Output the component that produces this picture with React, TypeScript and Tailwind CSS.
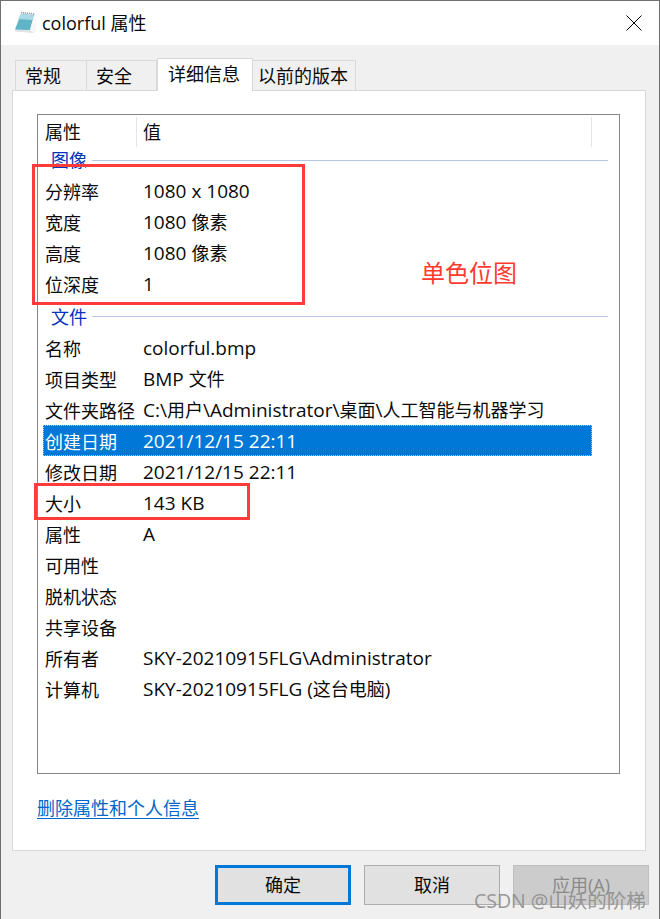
import React from 'react';

const font = "font-['Open_Sans','Noto_Sans_CJK_SC',sans-serif]";

// Latin glyphs in the reference run wider than the CJK ones, so CJK runs get their own size
const Value = ({ text }: { text?: string }) => (
  <span className="text-[19px] whitespace-nowrap">
    {(text || '').split(/([\u4e00-\u9fff]+)/).map((part, i) =>
      i % 2 ? (
        <span key={i} className="text-[18px]">
          {part}
        </span>
      ) : (
        part
      ),
    )}
  </span>
);

const Row = ({ name, value, selected }: { name: string; value?: string; selected?: boolean }) => (
  <div
    className={`flex h-[31px] w-[549px] items-center pt-[2px] ${
      selected ? 'bg-[#0078d7] text-white outline-1 -outline-offset-1 outline-dotted outline-[#9ec8ee]' : 'text-[#0a0a0a]'
    }`}
  >
    <span className="w-[100px] pl-[2px] whitespace-nowrap">{name}</span>
    <Value text={value} />
  </div>
);

const Group = ({ label, className }: { label: string; className: string }) => (
  <div className={`flex items-center ${className}`}>
    <span className="ml-[8px] mr-[5px] text-[#0033bc] leading-none whitespace-nowrap">{label}</span>
    <div className="h-px flex-1 bg-[#b4c5e6]" />
  </div>
);

const Tab = ({ label, className }: { label: string; className: string }) => (
  <div className={`flex h-[30px] items-center border border-b-0 border-[#d9d9d9] text-[#0a0a0a] whitespace-nowrap ${className}`}>
    {label}
  </div>
);

const Button = ({ label, className }: { label: string; className: string }) => (
  <div className={`flex h-[40px] w-[136px] items-center justify-center ${className}`}>{label}</div>
);

export default function App() {
  return (
    <div className={`relative h-[919px] w-[660px] overflow-hidden border-x border-t border-[#6f6f6f] bg-[#f0f0f0] text-[18px] leading-none ${font}`}>
      {/* Title bar */}
      <div className="flex h-[44px] items-center bg-white pl-[12px] pr-[17px]">
        <svg width="24" height="24" viewBox="0 0 24 24" className="mr-[5px]">
          <path d="M8 1.5 L22 3 L22.5 20 L20 22 L2 20.5 Z" fill="#dfe3e6" />
          <path d="M8 3 L21 4.5 L17 19 L2 18.5 Z" fill="#5fb4c8" />
          <path d="M8 3 L21 4.5 L19.5 9 L5 8 Z" fill="#a9dbe6" />
          <path d="M17 19 L21 4.5 L22 4.5 L22.5 19.5 L20 21.5 Z" fill="#f6f7f8" />
          <path d="M8 1.5 L22 3" stroke="#8f979c" strokeWidth="1.5" strokeDasharray="1 1" fill="none" />
        </svg>
        <span className="text-[#0a0a0a]">colorful 属性</span>
        <svg width="16" height="16" viewBox="0 0 16 16" className="ml-auto">
          <path d="M0.5 0.5 L15.5 15.5 M15.5 0.5 L0.5 15.5" stroke="#000" strokeWidth="1" fill="none" />
        </svg>
      </div>

      {/* Tabs */}
      <div className="flex h-[45px] items-end pl-[14px]">
        <Tab label="常规" className="w-[72px] -mr-px pl-[9px]" />
        <Tab label="安全" className="w-[71px] pl-[9px]" />
        <div className="relative z-10 -mb-px flex h-[33px] w-[96px] items-center justify-center border border-b-0 border-[#d9d9d9] bg-white pb-[3px] pr-[2px] text-[#0a0a0a] whitespace-nowrap">
          详细信息
        </div>
        <Tab label="以前的版本" className="w-[104px] -ml-px pl-[5px]" />
      </div>

      {/* Page */}
      <div className="ml-[11px] h-[761px] w-[634px] border border-[#d9d9d9] bg-white pl-[24px] pt-[23px]">
        <div className="h-[660px] w-[583px] border border-[#82878c] pl-[5px]">
          <div className="flex h-[30px] items-center pt-[3px] text-[#0a0a0a]">
            <span className="w-[94px] border-r border-[#e5e5e5] pl-[2px] leading-[30px]">属性</span>
            <span className="w-[455px] border-r border-[#e5e5e5] pl-[6px] leading-[30px]">值</span>
          </div>
          <Group label="图像" className="h-[30px] w-[565px]" />
          <Row name="分辨率" value="1080 x 1080" />
          <Row name="宽度" value="1080 像素" />
          <Row name="高度" value="1080 像素" />
          <Row name="位深度" value="1" />
          <Group label="文件" className="h-[33px] w-[565px] pt-[2px]" />
          <Row name="名称" value="colorful.bmp" />
          <Row name="项目类型" value="BMP 文件" />
          <Row name="文件夹路径" value="C:\用户\Administrator\桌面\人工智能与机器学习" />
          <Row name="创建日期" value="2021/12/15 22:11" selected />
          <Row name="修改日期" value="2021/12/15 22:11" />
          <Row name="大小" value="143 KB" />
          <Row name="属性" value="A" />
          <Row name="可用性" />
          <Row name="脱机状态" />
          <Row name="共享设备" />
          <Row name="所有者" value="SKY-20210915FLG\Administrator" />
          <Row name="计算机" value="SKY-20210915FLG (这台电脑)" />
        </div>
        <div className="mt-[24px] w-fit border-b border-[#0066cc] text-[#0066cc] leading-[20px]">删除属性和个人信息</div>
      </div>

      {/* Footer buttons */}
      <div className="flex gap-[13px] pl-[214px] pt-[14px] text-[#0a0a0a]">
        <Button label="确定" className="border-[3px] border-[#0078d7] bg-[#e1e1e1]" />
        <Button label="取消" className="border border-[#adadad] bg-[#e1e1e1]" />
        <Button label="应用(A)" className="border border-[#bfbfbf] bg-[#cccccc] text-[#8a8a8a]" />
      </div>

      {/* Red annotations over the screenshot */}
      <div className="absolute left-[31px] top-[163px] h-[141px] w-[273px] border-[3px] border-[#ff3b3b]" />
      <div className="absolute left-[33px] top-[482px] h-[37px] w-[216px] border-[3px] border-[#ff3b3b]" />
      <div className="absolute left-[420px] top-[260px] text-[24px] text-[#ff3b30] whitespace-nowrap">单色位图</div>
      <div className="absolute left-[473px] top-[890px] text-[19.5px] text-[#8f8f8f] opacity-90 whitespace-nowrap">CSDN @山妖的阶梯</div>
    </div>
  );
}
